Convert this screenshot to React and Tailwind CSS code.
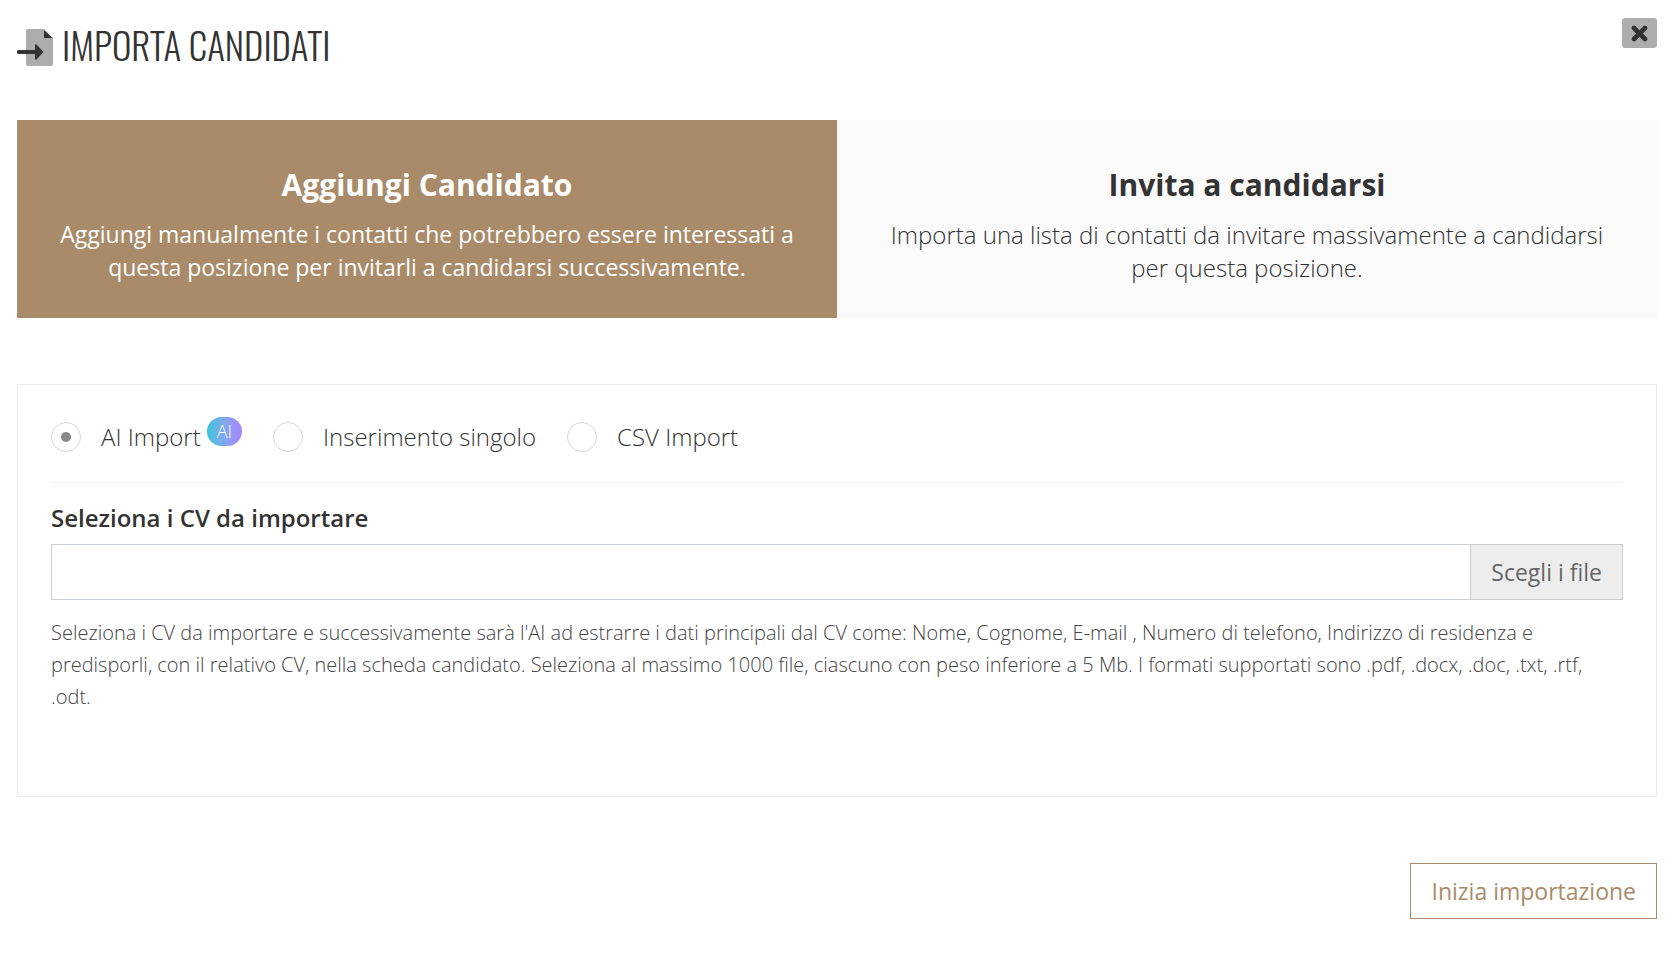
import React, { useState } from 'react';

const tabs = [
  {
    id: 'add',
    title: 'Aggiungi Candidato',
    text: 'Aggiungi manualmente i contatti che potrebbero essere interessati a questa posizione per invitarli a candidarsi successivamente.',
  },
  {
    id: 'invite',
    title: 'Invita a candidarsi',
    text: 'Importa una lista di contatti da invitare massivamente a candidarsi per questa posizione.',
  },
];

const modes = [
  { id: 'ai', label: 'AI Import', badge: 'AI' },
  { id: 'single', label: 'Inserimento singolo' },
  { id: 'csv', label: 'CSV Import' },
];

const ImportIcon = () => (
  <svg width="36" height="37" viewBox="0 0 36 37" aria-hidden="true">
    <path d="M11 0H27L36 9V35Q36 37 34 37H11Q9 37 9 35V2Q9 0 11 0Z" fill="#adadad" />
    <path d="M27 1L35.500 9H27Z" fill="#333333" />
    <path d="M1.500 21H18V16Q18.500 14.800 19.500 15.600L26.500 23L19.500 30.400Q18.500 31.200 18 30V25H1.500Q0 25 0 23.500V22.500Q0 21 1.500 21Z" fill="#333333" />
  </svg>
);

const Header = () => (
  <header className="flex items-start justify-between">
    <div className="flex items-start gap-[9px] pt-[5px]">
      <div className="pt-1.5">
        <ImportIcon />
      </div>
      <h1 className="font-['Oswald','Liberation_Sans_Narrow',sans-serif] text-[37px] leading-[44px] font-light uppercase">
        Importa candidati
      </h1>
    </div>
    <button type="button" aria-label="Chiudi" className="flex h-[30px] w-[35px] items-center justify-center rounded-[3px] bg-[#adadad]">
      <svg width="17" height="17" viewBox="0 0 17 17" aria-hidden="true">
        <path d="M3 3L14 14M14 3L3 14" stroke="#333333" strokeWidth="4.600" strokeLinecap="round" />
      </svg>
    </button>
  </header>
);

export default function App() {
  const [tab, setTab] = useState('add');
  const [mode, setMode] = useState('ai');

  return (
    <main className="px-[17px] pt-[18px] font-['Open_Sans',sans-serif] text-2xl font-light text-[#333333]">
      <Header />

      <div role="tablist" className="mt-[53px] grid grid-cols-2">
        {tabs.map((t) => (
          <button
            key={t.id}
            type="button"
            role="tab"
            aria-selected={tab === t.id}
            onClick={() => setTab(t.id)}
            className={`px-10 pt-[43px] pb-[34px] text-center leading-[33px] ${
              tab === t.id ? 'bg-[#a98b69] text-[23px] font-normal text-white' : 'bg-[#fafafa] text-2xl leading-[33px]'
            }`}
          >
            <span className="mb-[11px] block text-3xl leading-[44px] font-bold">{t.title}</span>
            <span className="block leading-[33px]">{t.text}</span>
          </button>
        ))}
      </div>

      <section className="mt-[66px] border border-[#e9ecef] px-[33px] pt-8 pb-[83px]">
        <div className="flex items-center gap-[31px] border-b border-[#f3f3f3] pb-[25px]">
          {modes.map((m) => (
            <label key={m.id} className="flex items-center gap-5 leading-10">
              <input
                type="radio"
                name="mode"
                checked={mode === m.id}
                onChange={() => setMode(m.id)}
                className="flex size-[30px] appearance-none items-center justify-center rounded-full border border-[#d8d8d8] checked:before:size-2.5 checked:before:rounded-full checked:before:bg-[#888888]"
              />
              <span className="flex items-start gap-1.5">
                {m.label}
                {m.badge && (
                  <span className="rounded-full bg-linear-to-r from-[#26c6da] to-[#a982ff] px-2.5 text-lg leading-[29px] text-white">
                    {m.badge}
                  </span>
                )}
              </span>
            </label>
          ))}
        </div>

        <label htmlFor="cv-files" className="mt-[17px] mb-2 block leading-9 font-semibold">
          Seleziona i CV da importare
        </label>
        <div className="flex h-14">
          <input id="cv-files" type="text" readOnly className="min-w-0 flex-1 border border-r-0 border-[#c9cedb] bg-white px-4" />
          <button type="button" className="border border-[#c8cacf] bg-[#ededed] px-5 text-[23px] font-normal text-[#666666]">
            Scegli i file
          </button>
        </div>
        <p className="mt-[17px] text-xl leading-8 text-[#444444]">
          Seleziona i CV da importare e successivamente sarà l'AI ad estrarre i dati principali dal CV come: Nome, Cognome,
          E-mail , Numero di telefono, Indirizzo di residenza e predisporli, con il relativo CV, nella scheda candidato.
          Seleziona al massimo 1000 file, ciascuno con peso inferiore a 5 Mb. I formati supportati sono .pdf, .docx, .doc,
          .txt, .rtf, .odt.
        </p>
      </section>

      <div className="mt-[66px] flex justify-end">
        <button type="button" className="h-14 border border-[#a98b69] px-5 text-[23px] font-normal text-[#a98b69]">
          Inizia importazione
        </button>
      </div>
    </main>
  );
}
